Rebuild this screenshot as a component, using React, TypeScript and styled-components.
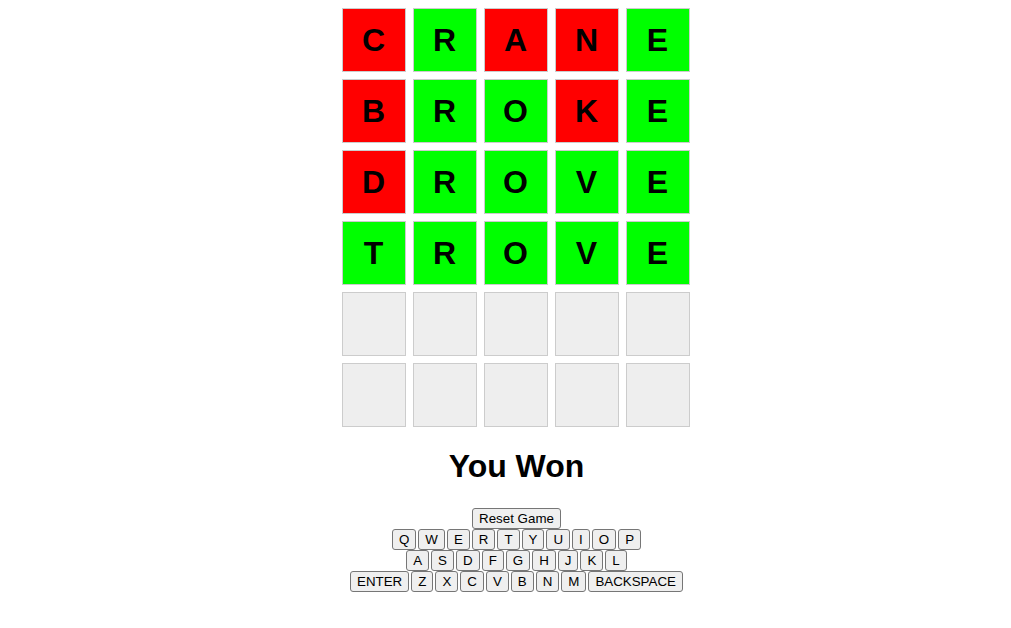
import React from "react";
import styled, { createGlobalStyle } from "styled-components";

const GlobalStyle = createGlobalStyle`
  body {
    margin: 8px;
    font-family: "Liberation Sans", Arial, sans-serif;
    background: #ffffff;
    color: #000000;
  }
`;

const Page = styled.div`
  display: flex;
  flex-direction: column;
  align-items: center;
  padding-left: 22px;
`;

const Board = styled.div`
  display: flex;
  flex-direction: column;
  gap: 7px;
  margin-right: 2px;
`;

const Row = styled.div`
  display: flex;
  gap: 7px;
`;

type Status = "miss" | "hit" | "empty";

const tileColors: Record<Status, string> = {
  miss: "#ff0000",
  hit: "#00ff00",
  empty: "#eeeeee",
};

const Tile = styled.div<{ $status: Status }>`
  width: 62px;
  height: 62px;
  border: 1px solid #cccccc;
  background: ${(p) => tileColors[p.$status]};
  display: flex;
  align-items: center;
  justify-content: center;
  font-family: "Liberation Sans", Arial, sans-serif;
  font-weight: bold;
  font-size: 32px;
  color: #000000;
`;

const Title = styled.h1`
  font-family: "Liberation Sans", Arial, sans-serif;
  font-size: 32px;
  font-weight: bold;
  margin: 21.44px 0 22.4px;
`;

const Keyboard = styled.div`
  display: flex;
  flex-direction: column;
  align-items: center;
`;

const KeyRow = styled.div`
  display: flex;
  gap: 2px;
  justify-content: center;
`;

const Key = styled.button`
  font-family: "Liberation Sans", Arial, sans-serif;
  font-size: 13.333px;
  line-height: normal;
  height: 21px;
  padding: 0 6px;
  margin: 0;
  border: 1px solid #767676;
  border-radius: 3px;
  background: #efefef;
  color: #000000;
  cursor: pointer;
`;

const guesses: { word: string; marks: string }[] = [
  { word: "CRANE", marks: "xoxxo" },
  { word: "BROKE", marks: "xooxo" },
  { word: "DROVE", marks: "xoooo" },
  { word: "TROVE", marks: "ooooo" },
];

const rows = ["QWERTYUIOP", "ASDFGHJKL"];

export default function App() {
  const boardRows = Array.from({ length: 6 }, (_, r) => {
    const g = guesses[r];
    return Array.from({ length: 5 }, (_, c) => {
      if (!g) return { letter: "", status: "empty" as Status };
      return {
        letter: g.word[c],
        status: (g.marks[c] === "o" ? "hit" : "miss") as Status,
      };
    });
  });

  return (
    <>
      <GlobalStyle />
      <Page>
        <Board>
          {boardRows.map((row, r) => (
            <Row key={r}>
              {row.map((t, c) => (
                <Tile key={c} $status={t.status}>
                  {t.letter}
                </Tile>
              ))}
            </Row>
          ))}
        </Board>
        <Title>You Won</Title>
        <Keyboard>
          <KeyRow>
            <Key>Reset Game</Key>
          </KeyRow>
          {rows.map((r) => (
            <KeyRow key={r}>
              {r.split("").map((k) => (
                <Key key={k}>{k}</Key>
              ))}
            </KeyRow>
          ))}
          <KeyRow>
            <Key>ENTER</Key>
            {"ZXCVBNM".split("").map((k) => (
              <Key key={k}>{k}</Key>
            ))}
            <Key>BACKSPACE</Key>
          </KeyRow>
        </Keyboard>
      </Page>
    </>
  );
}
